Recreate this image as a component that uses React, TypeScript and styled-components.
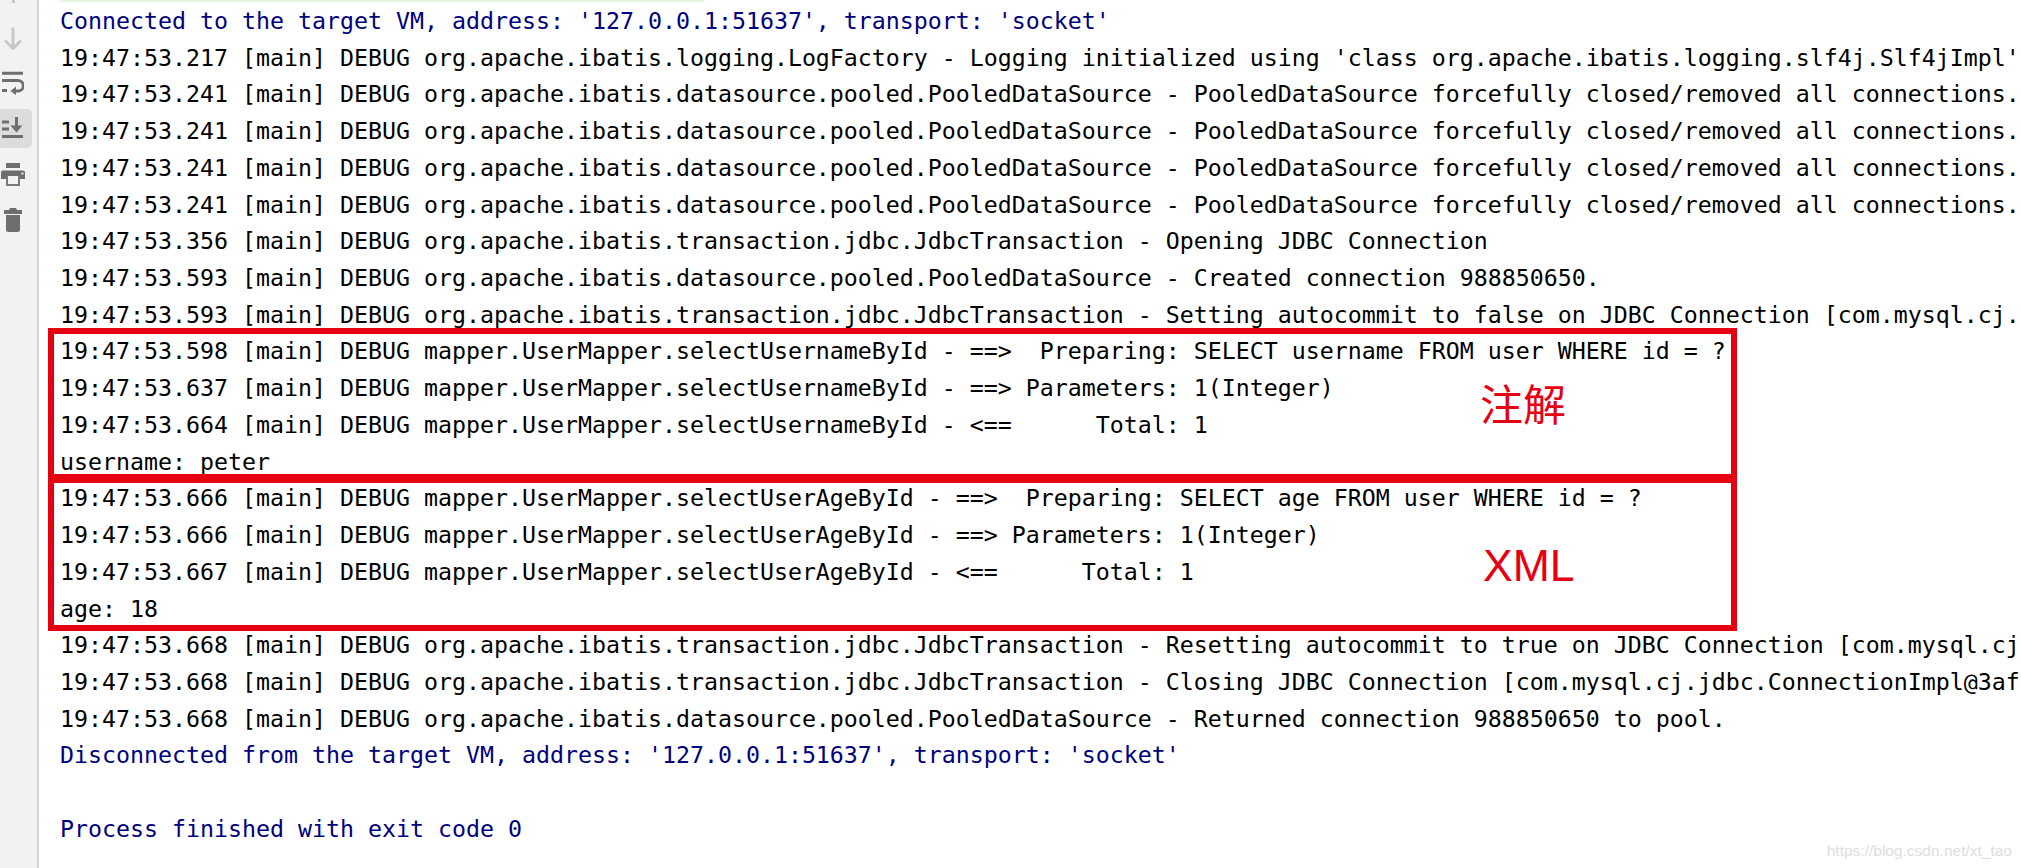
import { createGlobalStyle } from "styled-components";
import styled from "styled-components";

const GlobalStyle = createGlobalStyle`
  html, body {
    margin: 0;
    padding: 0;
    background: #ffffff;
    overflow: hidden;
  }
`;

const Window = styled.div`
  position: relative;
  display: flex;
  width: 2021px;
  height: 868px;
  overflow: hidden;
  background: #ffffff;
`;

const SideBar = styled.aside`
  flex: none;
  box-sizing: border-box;
  width: 39px;
  height: 100%;
  background: #f2f2f2;
  border-right: 2px solid #d1d1d1;
  display: flex;
  flex-direction: column;
  gap: 6.5px;
`;

/* bottom of an icon scrolled off the top edge */
const CutIcon = styled.div`
  width: 3px;
  height: 3px;
  margin: 0 0 8.5px 12px;
  background: #c6c6c6;
`;

const ToolButton = styled.div<{ $active?: boolean }>`
  flex: none;
  width: 38px;
  height: 39px;
  margin-left: -6px;
  display: flex;
  align-items: center;
  justify-content: center;
  border-radius: 5px;
  background: ${(props) => (props.$active ? "#dcdcdc" : "transparent")};
`;

const Console = styled.main`
  flex: 1;
  min-width: 0;
  display: flex;
  flex-direction: column;
`;

const TopStrip = styled.div`
  flex: none;
  height: 2px;
  margin-left: 21px;
  width: 644px;
  background: #e6f5e1;
`;

const LogList = styled.div`
  padding: 1px 0 0 21px;
`;

const LogLine = styled.div<{ $system?: boolean }>`
  height: 36.72px;
  line-height: 36.72px;
  font-family: "DejaVu Sans Mono", "Liberation Mono", monospace;
  font-size: 23.25px;
  white-space: pre;
  color: ${(props) => (props.$system ? "#000080" : "#000000")};
`;

const RedBox = styled.div<{ $top: number; $height: number }>`
  position: absolute;
  box-sizing: border-box;
  left: 48px;
  top: ${(props) => props.$top}px;
  width: 1689px;
  height: ${(props) => props.$height}px;
  border: 6px solid #e60012;
`;

const Note = styled.span<{ $left: number; $top: number; $size: number }>`
  position: absolute;
  left: ${(props) => props.$left}px;
  top: ${(props) => props.$top}px;
  font-family: "Liberation Sans", "Noto Sans CJK SC", sans-serif;
  font-size: ${(props) => props.$size}px;
  line-height: 1;
  color: #e60012;
`;

const Watermark = styled.span`
  position: absolute;
  right: 9px;
  bottom: 8px;
  font-family: "Liberation Sans", sans-serif;
  font-size: 15.5px;
  color: #dedede;
`;

const POOLED =
  "19:47:53.241 [main] DEBUG org.apache.ibatis.datasource.pooled.PooledDataSource - PooledDataSource forcefully closed/removed all connections.";

const lines: { text: string; system?: boolean }[] = [
  { text: "Connected to the target VM, address: '127.0.0.1:51637', transport: 'socket'", system: true },
  { text: "19:47:53.217 [main] DEBUG org.apache.ibatis.logging.LogFactory - Logging initialized using 'class org.apache.ibatis.logging.slf4j.Slf4jImpl'" },
  { text: POOLED },
  { text: POOLED },
  { text: POOLED },
  { text: POOLED },
  { text: "19:47:53.356 [main] DEBUG org.apache.ibatis.transaction.jdbc.JdbcTransaction - Opening JDBC Connection" },
  { text: "19:47:53.593 [main] DEBUG org.apache.ibatis.datasource.pooled.PooledDataSource - Created connection 988850650." },
  { text: "19:47:53.593 [main] DEBUG org.apache.ibatis.transaction.jdbc.JdbcTransaction - Setting autocommit to false on JDBC Connection [com.mysql.cj." },
  { text: "19:47:53.598 [main] DEBUG mapper.UserMapper.selectUsernameById - ==>  Preparing: SELECT username FROM user WHERE id = ?" },
  { text: "19:47:53.637 [main] DEBUG mapper.UserMapper.selectUsernameById - ==> Parameters: 1(Integer)" },
  { text: "19:47:53.664 [main] DEBUG mapper.UserMapper.selectUsernameById - <==      Total: 1" },
  { text: "username: peter" },
  { text: "19:47:53.666 [main] DEBUG mapper.UserMapper.selectUserAgeById - ==>  Preparing: SELECT age FROM user WHERE id = ?" },
  { text: "19:47:53.666 [main] DEBUG mapper.UserMapper.selectUserAgeById - ==> Parameters: 1(Integer)" },
  { text: "19:47:53.667 [main] DEBUG mapper.UserMapper.selectUserAgeById - <==      Total: 1" },
  { text: "age: 18" },
  { text: "19:47:53.668 [main] DEBUG org.apache.ibatis.transaction.jdbc.JdbcTransaction - Resetting autocommit to true on JDBC Connection [com.mysql.cj" },
  { text: "19:47:53.668 [main] DEBUG org.apache.ibatis.transaction.jdbc.JdbcTransaction - Closing JDBC Connection [com.mysql.cj.jdbc.ConnectionImpl@3af" },
  { text: "19:47:53.668 [main] DEBUG org.apache.ibatis.datasource.pooled.PooledDataSource - Returned connection 988850650 to pool." },
  { text: "Disconnected from the target VM, address: '127.0.0.1:51637', transport: 'socket'", system: true },
  { text: " " },
  { text: "Process finished with exit code 0", system: true },
];

const ArrowDown = () => (
  <svg width="20" height="24" viewBox="0 0 20 24">
    <path d="M10 1.500V22M2 14.500l8 8 8-8" fill="none" stroke="#c6c6c6" strokeWidth="2.800" />
  </svg>
);

const SoftWrap = () => (
  <svg width="22" height="24" viewBox="0 0 22 24">
    <path d="M0 2.200h21M0 19.500h5" fill="none" stroke="#6e6e6e" strokeWidth="3" />
    <path d="M0 9.500h16a5 5 0 0 1 0 10.500h-4" fill="none" stroke="#6e6e6e" strokeWidth="2.800" />
    <path d="M14 15.500L8.500 20l5.500 4z" fill="#6e6e6e" />
  </svg>
);

const ScrollEnd = () => (
  <svg width="22" height="24" viewBox="0 0 22 24">
    <path d="M0 5h7M0 12h7M0 19.500h21" fill="none" stroke="#6e6e6e" strokeWidth="3" />
    <path d="M14.500 0v10" fill="none" stroke="#6e6e6e" strokeWidth="3" />
    <path d="M8.500 8.500h12l-6 7z" fill="#6e6e6e" />
  </svg>
);

const Printer = () => (
  <svg width="26" height="24" viewBox="0 0 26 24">
    <path d="M6 1h14v5H6z" fill="#6e6e6e" />
    <path d="M3 8.500h20a2 2 0 0 1 2 2V17h-5v-3H6v3H1v-6.500a2 2 0 0 1 2-2z" fill="#6e6e6e" />
    <path d="M7 14v9h12v-9" fill="none" stroke="#7a7a7a" strokeWidth="2" />
    <rect x="21.500" y="10.500" width="2" height="2" fill="#f2f2f2" />
  </svg>
);

const Trash = () => (
  <svg width="20" height="24" viewBox="0 0 20 24">
    <path d="M7 0h6l1 2h5v4H1V2h5z" fill="#6e6e6e" />
    <path d="M3 7h14v14.500a2.500 2.500 0 0 1-2.500 2.500h-9A2.500 2.500 0 0 1 3 21.500z" fill="#6e6e6e" />
  </svg>
);

const App = () => {
  return (
    <Window>
      <GlobalStyle />
      <SideBar>
        <CutIcon />
        <ToolButton><ArrowDown /></ToolButton>
        <ToolButton><SoftWrap /></ToolButton>
        <ToolButton $active><ScrollEnd /></ToolButton>
        <ToolButton><Printer /></ToolButton>
        <ToolButton><Trash /></ToolButton>
      </SideBar>
      <Console>
        <TopStrip />
        <LogList>
          {lines.map((line, i) => (
            <LogLine key={i} $system={line.system}>{line.text}</LogLine>
          ))}
        </LogList>
      </Console>
      <RedBox $top={328} $height={152} />
      <RedBox $top={477} $height={154} />
      <Note $left={1480} $top={385} $size={43}>注解</Note>
      <Note $left={1483} $top={544} $size={44.5}>XML</Note>
      <Watermark>https://blog.csdn.net/xt_tao</Watermark>
    </Window>
  );
};

export default App;
